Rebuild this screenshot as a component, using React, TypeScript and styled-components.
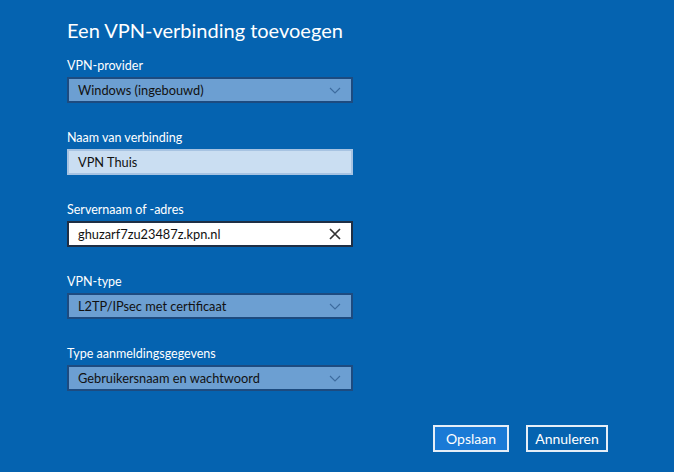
import React from "react";
import styled, { createGlobalStyle } from "styled-components";

const GlobalStyle = createGlobalStyle`
  html, body {
    margin: 0;
    padding: 0;
    background: #0563b0;
  }
  body {
    font-family: Lato, "Open Sans", "Liberation Sans", sans-serif;
  }
`;

const Page = styled.div`
  width: 674px;
  height: 472px;
  box-sizing: border-box;
  padding: 14px 66px 0 67px;
  background: #0563b0;
  color: #fff;
  display: flex;
  flex-direction: column;
`;

const Title = styled.h1`
  margin: 0 0 11px 0;
  font-size: 20px;
  line-height: 32px;
  font-weight: 400;
  color: #fff;
`;

const Form = styled.div`
  display: flex;
  flex-direction: column;
  gap: 26px;
`;

const Group = styled.div`
  display: flex;
  flex-direction: column;
  gap: 2px;
`;

const Label = styled.div`
  font-size: 12.5px;
  line-height: 18px;
  color: #fff;
`;

type Variant = "select" | "filled" | "focus";

const Box = styled.div<{ $variant: Variant }>`
  width: 286px;
  height: 26px;
  box-sizing: border-box;
  display: flex;
  align-items: center;
  justify-content: space-between;
  padding: 0 10px 0 9px;
  font-size: 12.8px;
  color: #111;
  border: 2px solid
    ${(p) =>
      p.$variant === "select"
        ? "#1d4b80"
        : p.$variant === "focus"
        ? "#1f2f45"
        : "#a7c3e2"};
  background: ${(p) =>
    p.$variant === "select"
      ? "#6c9fd2"
      : p.$variant === "focus"
      ? "#ffffff"
      : "#cadef2"};
`;

const Chevron = () => (
  <svg width="12" height="7" viewBox="0 0 12 7">
    <path d="M1 1 L6 6 L11 1" fill="none" stroke="#3d6b9e" strokeWidth="1.1" />
  </svg>
);

const Clear = () => (
  <svg width="12" height="12" viewBox="0 0 12 12">
    <path d="M1 1 L11 11 M11 1 L1 11" fill="none" stroke="#333" strokeWidth="1.7" />
  </svg>
);

const Footer = styled.div`
  margin-top: auto;
  margin-bottom: 20px;
  display: flex;
  justify-content: flex-end;
  gap: 17px;
`;

const Button = styled.button<{ $primary?: boolean }>`
  height: 27px;
  box-sizing: border-box;
  border: 2px solid #e6eef7;
  background: ${(p) => (p.$primary ? "#1a7ad6" : "#0563b0")};
  color: #fff;
  font-family: inherit;
  font-size: 14px;
  padding: 0;
  width: ${(p) => (p.$primary ? "76px" : "82px")};
  cursor: pointer;
`;

const fields: { label: string; value: string; variant: Variant }[] = [
  { label: "VPN-provider", value: "Windows (ingebouwd)", variant: "select" },
  { label: "Naam van verbinding", value: "VPN Thuis", variant: "filled" },
  { label: "Servernaam of -adres", value: "ghuzarf7zu23487z.kpn.nl", variant: "focus" },
  { label: "VPN-type", value: "L2TP/IPsec met certificaat", variant: "select" },
  { label: "Type aanmeldingsgegevens", value: "Gebruikersnaam en wachtwoord", variant: "select" },
];

export default function App() {
  return (
    <>
      <GlobalStyle />
      <Page>
        <Title>Een VPN-verbinding toevoegen</Title>
        <Form>
          {fields.map((f) => (
            <Group key={f.label}>
              <Label>{f.label}</Label>
              <Box $variant={f.variant}>
                <span>{f.value}</span>
                {f.variant === "select" && <Chevron />}
                {f.variant === "focus" && <Clear />}
              </Box>
            </Group>
          ))}
        </Form>
        <Footer>
          <Button $primary>Opslaan</Button>
          <Button>Annuleren</Button>
        </Footer>
      </Page>
    </>
  );
}
